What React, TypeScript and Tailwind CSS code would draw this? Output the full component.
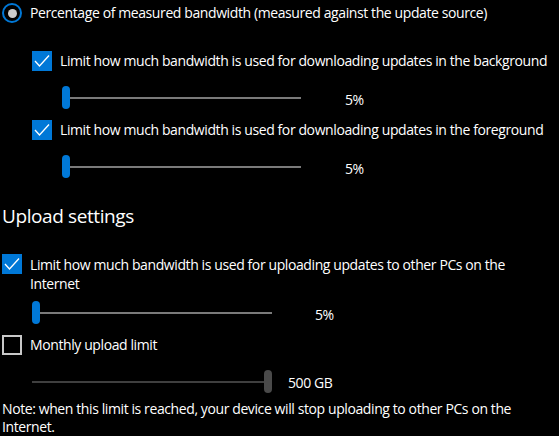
import React from 'react';

interface CheckProps {
  checked: boolean;
}

const CheckBox = ({ checked }: CheckProps): JSX.Element =>
  checked ? (
    <div className="flex h-5 w-5 shrink-0 items-center justify-center bg-[#0078d7]">
      <svg width="20" height="20" viewBox="0 0 20 20" fill="none">
        <polyline points="3,10 7.5,15 17,4.5" stroke="#fff" strokeWidth="1.3" />
      </svg>
    </div>
  ) : (
    <div className="h-5 w-5 shrink-0 border-2 border-[#c8c8c8]" />
  );

interface SliderProps {
  width: number;
  atEnd?: boolean;
  disabled?: boolean;
}

const Slider = ({ width, atEnd, disabled }: SliderProps): JSX.Element => {
  const thumb = (
    <div className={`h-[23px] w-2 shrink-0 rounded-full ${disabled ? 'bg-[#4a4a4a]' : 'bg-[#0078d7]'}`} />
  );
  return (
    <div className="flex h-[23px] items-center" style={{ width }}>
      {!atEnd && thumb}
      <div className={`h-[2px] flex-1 ${disabled ? 'bg-[#3f3f3f]' : 'bg-[#7a7a7a]'}`} />
      {atEnd && thumb}
    </div>
  );
};

export default function App(): JSX.Element {
  return (
    <div className="h-[436px] w-[559px] overflow-hidden bg-black font-['Open_Sans',sans-serif] text-[14px] leading-[18px] tracking-[-0.4px] text-white">
      {/* radio */}
      <div className="ml-[2px] mt-[3px] flex h-5 items-center gap-2">
        <div className="flex h-5 w-5 items-center justify-center rounded-full border-2 border-[#0078d7]">
          <div className="h-[9px] w-[9px] rounded-full bg-[#cccccc]" />
        </div>
        <span className="whitespace-nowrap">Percentage of measured bandwidth (measured against the update source)</span>
      </div>

      <div className="ml-[32px] mt-[28px] flex h-5 items-center gap-2">
        <CheckBox checked />
        <span className="whitespace-nowrap">Limit how much bandwidth is used for downloading updates in the background</span>
      </div>
      <div className="ml-[62px] mt-[15px] flex items-center">
        <Slider width={239} />
        <span className="ml-[44px] mt-[5px]">5%</span>
      </div>

      <div className="ml-[32px] mt-[11px] flex h-5 items-center gap-2">
        <CheckBox checked />
        <span className="whitespace-nowrap">Limit how much bandwidth is used for downloading updates in the foreground</span>
      </div>
      <div className="ml-[62px] mt-[15px] flex items-center">
        <Slider width={239} />
        <span className="ml-[44px] mt-[5px]">5%</span>
      </div>

      <h2 className="ml-[2px] mt-[25px] text-[19px] leading-[26px]">Upload settings</h2>

      <div className="ml-[2px] mt-[25px] flex items-start gap-2">
        <CheckBox checked />
        <span className="mt-px w-[520px] leading-[19px]">
          Limit how much bandwidth is used for uploading updates to other PCs on the Internet
        </span>
      </div>
      <div className="ml-[32px] mt-[8px] flex items-center">
        <Slider width={240} />
        <span className="ml-[43px] mt-[5px]">5%</span>
      </div>

      <div className="ml-[2px] mt-[11px] flex h-5 items-center gap-2">
        <CheckBox checked={false} />
        <span>Monthly upload limit</span>
      </div>
      <div className="ml-[32px] mt-[15px] flex items-center">
        <Slider width={240} atEnd disabled />
        <span className="ml-[16px] mt-[3px]">500 GB</span>
      </div>

      <p className="ml-[2px] mt-[7px] w-[540px] leading-[18px]">
        Note: when this limit is reached, your device will stop uploading to other PCs on the Internet.
      </p>
    </div>
  );
}
